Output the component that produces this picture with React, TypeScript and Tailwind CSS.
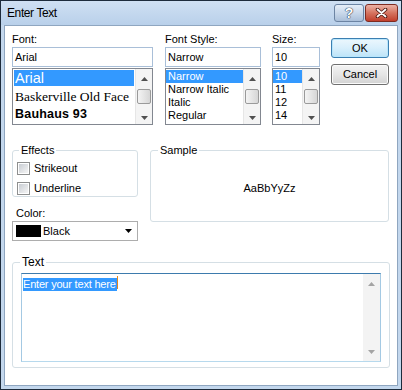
import type { ReactNode } from "react";

function Arrow({ up, tone = "fill-[#505050]" }: { up?: boolean; tone?: string }) {
  return (
    <svg width="7" height="4" viewBox="0 0 7 4" className={tone}>
      <polygon points={up ? "3.5,0 7,4 0,4" : "0,0 7,0 3.5,4"} />
    </svg>
  );
}

// Classic list scroll bar with a small thumb near the top.
function ListScroll() {
  return (
    <div className="flex w-[17px] flex-col items-center border-l border-[#e6e6e6] bg-[#f4f4f4] pt-[8px] pb-[4px]">
      <Arrow up />
      <div className="mt-[8px] h-[15px] w-[14px] rounded-[2px] border border-[#9a9a9a] bg-gradient-to-r from-[#f4f4f4] to-[#d6d6d6]" />
      <div className="flex-1" />
      <Arrow />
    </div>
  );
}

function Label({ children }: { children: ReactNode }) {
  return <div className="h-[14px] leading-[14px]">{children}</div>;
}

function TextBox({ value }: { value: string }) {
  return (
    <div className="mt-[1px] flex h-[20px] items-center border border-[#a9bfd8] bg-white pl-[2px]">
      {value}
    </div>
  );
}

function ListBox({ children }: { children: ReactNode }) {
  return (
    <div className="mt-[1px] flex h-[57px] border border-[#828790] bg-white">
      <div className="min-w-0 flex-1 overflow-hidden pt-px">{children}</div>
      <ListScroll />
    </div>
  );
}

function Row({ text, selected }: { text: string; selected?: boolean }) {
  return (
    <div
      className={`h-[13px] pl-[2px] leading-[13px] ${selected ? "bg-[#3399ff] text-white" : ""}`}
    >
      {text}
    </div>
  );
}

function CheckRow({ label, className = "" }: { label: string; className?: string }) {
  return (
    <div className={`flex items-center pl-[4px] ${className}`}>
      <div className="h-[13px] w-[13px] border border-[#8e8f8f] bg-white p-px">
        <div className="h-full w-full bg-gradient-to-br from-[#c9cdd3] to-[#f5f5f5]" />
      </div>
      <span className="ml-[4px] leading-[13px]">{label}</span>
    </div>
  );
}

export default function App() {
  return (
    <div className="flex h-[390px] w-[402px] flex-col border border-[#1d2b3c] bg-[#c3d7ed] font-['Liberation_Sans',Arial,sans-serif] text-[11px] text-black">
      {/* Title bar */}
      <div className="flex h-[24px] items-center bg-gradient-to-b from-[#cfe0f3] to-[#b9d0ea] pl-[6px] pr-[3px]">
        <span className="text-[12px] tracking-[-0.4px]">Enter Text</span>
        <div className="ml-auto flex gap-[1px]">
          <div className="flex h-[18px] w-[30px] items-center justify-center rounded-[3px] border border-[#6c84a3] bg-gradient-to-b from-[#e6eef8] via-[#c9d8ea] to-[#aabfd9]">
            <span className="text-[14px] font-bold leading-none text-white [text-shadow:0_0_1px_#2b3b52,0_0_1px_#2b3b52,0_0_1px_#2b3b52]">
              ?
            </span>
          </div>
          <div className="flex h-[18px] w-[33px] items-center justify-center rounded-[3px] border border-[#7e2b21] bg-gradient-to-b from-[#ecb2a6] via-[#d5735f] to-[#c13e2c]">
            <svg width="13" height="10" viewBox="0 0 13 10">
              <path d="M2.5 1.5 L10.5 8.5 M10.5 1.5 L2.5 8.5" stroke="#4a1710" strokeWidth="3.6" strokeLinecap="round" />
              <path d="M2.5 1.5 L10.5 8.5 M10.5 1.5 L2.5 8.5" stroke="#ffffff" strokeWidth="1.8" strokeLinecap="round" />
            </svg>
          </div>
        </div>
      </div>

      {/* Client area */}
      <div className="mx-[3px] mb-[3px] flex-1 border border-[#8fa6c0] bg-white pl-[7px] pt-[6px]">
        <div className="flex">
          <div className="w-[141px]">
            <Label>Font:</Label>
            <TextBox value="Arial" />
            <div className="mt-[1px] flex h-[57px] border border-[#828790] bg-white">
              <div className="min-w-0 flex-1 overflow-hidden whitespace-nowrap px-px pt-px">
                <div className="h-[16px] bg-[#3399ff] pl-px text-[14.5px] leading-[16px] text-white">Arial</div>
                <div className="h-[18px] pl-px font-['Liberation_Serif',serif] text-[13.5px] leading-[22px]">
                  Baskerville Old Face
                </div>
                <div className="h-[18px] pl-px text-[12.5px] font-bold leading-[20px] tracking-[0.2px]">
                  Bauhaus 93
                </div>
              </div>
              <ListScroll />
            </div>
          </div>

          <div className="ml-[12px] w-[96px]">
            <Label>Font Style:</Label>
            <TextBox value="Narrow" />
            <ListBox>
              <Row text="Narrow" selected />
              <Row text="Narrow Italic" />
              <Row text="Italic" />
              <Row text="Regular" />
            </ListBox>
          </div>

          <div className="ml-[11px] w-[48px]">
            <Label>Size:</Label>
            <TextBox value="10" />
            <ListBox>
              <Row text="10" selected />
              <Row text="11" />
              <Row text="12" />
              <Row text="14" />
            </ListBox>
          </div>

          <div className="ml-[11px] mt-[6px] w-[58px]">
            <button
              type="button"
              className="flex h-[20px] w-full items-center justify-center rounded-[3px] border border-[#3c7fb1] bg-gradient-to-b from-[#ecf7fd] via-[#d8effc] to-[#bde4f8] shadow-[inset_0_0_0_1px_#b9e6fc]"
            >
              OK
            </button>
            <button
              type="button"
              className="mt-[6px] flex h-[21px] w-full items-center justify-center rounded-[3px] border border-[#707070] bg-gradient-to-b from-[#f3f3f3] via-[#e6e6e6] to-[#d3d3d3] shadow-[inset_0_0_0_1px_#fbfbfb]"
            >
              Cancel
            </button>
          </div>
        </div>

        <div className="mt-[18px] flex items-start">
          <div className="w-[126px]">
            <fieldset className="h-[54px] rounded-[3px] border border-[#d5dfe5]">
              <legend className="ml-[6px] px-[2px] leading-[14px]">Effects</legend>
              <CheckRow label="Strikeout" className="mt-[5px]" />
              <CheckRow label="Underline" className="mt-[7px]" />
            </fieldset>
            <div className="mt-[9px] pl-[4px]">
              <Label>Color:</Label>
            </div>
            <div className="mt-[1px] flex h-[20px] items-center border border-[#adadad] bg-white pl-[3px] pr-[5px]">
              <div className="h-[12px] w-[25px] bg-black" />
              <span className="ml-[2px]">Black</span>
              <div className="ml-auto">
                <Arrow tone="fill-black" />
              </div>
            </div>
          </div>

          <fieldset className="ml-[12px] flex h-[79px] w-[239px] items-center justify-center rounded-[3px] border border-[#d5dfe5]">
            <legend className="ml-[7px] px-[2px] leading-[14px]">Sample</legend>
            <div className="flex h-full items-center justify-center pb-[2px]">AaBbYyZz</div>
          </fieldset>
        </div>

        <fieldset className="mt-[14px] h-[113px] w-[378px] rounded-[3px] border border-[#d5dfe5]">
          <legend className="ml-[7px] px-[2px] text-[12px] leading-[14px]">Text</legend>
          <div className="ml-[8px] mt-[4px] flex h-[89px] w-[360px] border border-[#a4c9e3] border-t-[#3d7bad] border-b-[#b7d9ed] bg-white">
            <div className="flex-1 pl-[1px] pt-[2px]">
              <span className="inline-flex h-[13px] items-center bg-[#3399ff] pr-px tracking-[-0.2px] text-white">
                Enter your text here
              </span>
              <span className="inline-block h-[13px] w-px bg-[#e2861e] align-top" />
            </div>
            <div className="flex w-[17px] flex-col items-center bg-[#f3f3f3] pt-[8px] pb-[7px]">
              <Arrow up tone="fill-[#a4a4a4]" />
              <div className="flex-1" />
              <Arrow tone="fill-[#a4a4a4]" />
            </div>
          </div>
        </fieldset>
      </div>
    </div>
  );
}
